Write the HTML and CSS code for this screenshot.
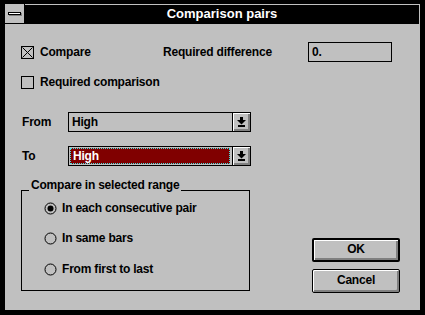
FILE: index.html
```html
<!DOCTYPE html>
<html lang="en">
<head>
    <meta charset="UTF-8">
    <title>Comparison pairs</title>
    <link rel="stylesheet" href="styles.css">
</head>
<body>
    <div class="window">
        <!-- Title bar -->
        <div class="titlebar">
            <div class="sysmenu"><span class="sysmenu-bar"></span></div>
            <div class="caption">Comparison pairs</div>
        </div>

        <div class="client">
            <!-- Compare / required difference -->
            <div class="row row-top">
                <div class="check cell-compare">
                    <svg class="box" width="13" height="13" viewBox="0 0 13 13">
                        <rect x="0.5" y="0.5" width="12" height="12" fill="none" stroke="#000"/>
                        <path d="M1.5 1.5 L11.5 11.5 M11.5 1.5 L1.5 11.5" stroke="#000" stroke-width="1"/>
                    </svg>
                    <span>Compare</span>
                </div>
                <span class="label-diff">Required difference</span>
                <div class="edit">0.</div>
            </div>

            <div class="row row-second">
                <div class="check">
                    <svg class="box" width="13" height="13" viewBox="0 0 13 13">
                        <rect x="0.5" y="0.5" width="12" height="12" fill="none" stroke="#000"/>
                    </svg>
                    <span>Required comparison</span>
                </div>
            </div>

            <!-- Combos -->
            <div class="row row-from">
                <span class="combo-label">From</span>
                <div class="combo">
                    <div class="combo-field">High</div>
                    <div class="combo-btn">
                        <svg width="9" height="10" viewBox="0 0 9 10">
                            <rect x="3" y="0" width="3" height="3" fill="#000"/>
                            <polygon points="0,3 9,3 4.5,7.5" fill="#000"/>
                            <rect x="1" y="8" width="7" height="2" fill="#000"/>
                        </svg>
                    </div>
                </div>
            </div>

            <div class="row row-to">
                <span class="combo-label">To</span>
                <div class="combo">
                    <div class="combo-field focused"><span class="selected">High</span></div>
                    <div class="combo-btn">
                        <svg width="9" height="10" viewBox="0 0 9 10">
                            <rect x="3" y="0" width="3" height="3" fill="#000"/>
                            <polygon points="0,3 9,3 4.5,7.5" fill="#000"/>
                            <rect x="1" y="8" width="7" height="2" fill="#000"/>
                        </svg>
                    </div>
                </div>
            </div>

            <!-- Range group and buttons -->
            <div class="bottom">
                <div class="group">
                    <span class="group-title">Compare in selected range</span>
                    <div class="radio">
                        <svg width="13" height="13" viewBox="0 0 13 13">
                            <circle cx="6.5" cy="6.5" r="5.5" fill="none" stroke="#000"/>
                            <circle cx="6.5" cy="6.5" r="3" fill="#000"/>
                        </svg>
                        <span>In each consecutive pair</span>
                    </div>
                    <div class="radio">
                        <svg width="13" height="13" viewBox="0 0 13 13">
                            <circle cx="6.5" cy="6.5" r="5.5" fill="none" stroke="#000"/>
                        </svg>
                        <span>In same bars</span>
                    </div>
                    <div class="radio">
                        <svg width="13" height="13" viewBox="0 0 13 13">
                            <circle cx="6.5" cy="6.5" r="5.5" fill="none" stroke="#000"/>
                        </svg>
                        <span>From first to last</span>
                    </div>
                </div>

                <div class="buttons">
                    <div class="button default">OK</div>
                    <div class="button">Cancel</div>
                </div>
            </div>
        </div>
    </div>
</body>
</html>
```

FILE: styles.css
```css
/* General */
body {
    margin: 0;
    background: #000;
    font-family: 'Liberation Sans', Arial, sans-serif;
    font-weight: bold;
    font-size: 12px;
    letter-spacing: -0.2px;
    color: #000;
}

.window {
    width: 415px;
    margin: 4px 0 0 5px;
}

/* Title bar */
.titlebar {
    display: flex;
    height: 20px;
}

.sysmenu {
    width: 19px;
    height: 19px;
    background: #c0c0c0;
    padding: 8px 0 0 3px;
    box-sizing: border-box;
}

.sysmenu-bar {
    display: block;
    width: 11px;
    height: 1px;
    background: #fff;
    border: 1px solid #000;
    box-shadow: 1px 1px 0 #808080;
}

.caption {
    flex: 1;
    margin-left: 1px;
    border-top: 1px solid #c0c0c0;
    border-right: 1px solid #c0c0c0;
    color: #fff;
    text-align: center;
    font-size: 13px;
    letter-spacing: 0;
    line-height: 18px;
}

/* Client area */
.client {
    height: 286px;
    background: #c0c0c0;
    padding: 18px 0 0 16px;
    box-sizing: border-box;
}

.row {
    display: flex;
    align-items: center;
    height: 20px;
}

.row-second {
    margin-top: 10px;
}

.row-from {
    margin-top: 20px;
}

.row-to {
    margin-top: 14px;
}

.check {
    display: flex;
    align-items: center;
    gap: 6px;
}

.cell-compare {
    width: 142px;
}

.label-diff {
    width: 145px;
}

.edit {
    width: 84px;
    height: 20px;
    border: 1px solid #000;
    box-sizing: border-box;
    padding-left: 3px;
    line-height: 18px;
}

/* Combo boxes */
.combo-label {
    width: 47px;
    padding-left: 1px;
    box-sizing: border-box;
}

.combo {
    display: flex;
    width: 183px;
    height: 20px;
    border: 1px solid #000;
    box-sizing: border-box;
}

.combo-field {
    flex: 1;
    padding-left: 3px;
    line-height: 18px;
}

.combo-field.focused {
    padding: 1px 2px 1px 1px;
}

.combo-field .selected {
    display: block;
    height: 16px;
    line-height: 14px;
    padding-left: 2px;
    background: #800000;
    color: #fff;
    border: 1px dotted #40e0e0;
    box-sizing: border-box;
}

.combo-btn {
    width: 18px;
    border-left: 1px solid #000;
    box-shadow: inset 1px 1px 0 #fff, inset -2px -2px 0 #808080;
    display: flex;
    justify-content: center;
    align-items: center;
    padding-bottom: 1px;
    box-sizing: border-box;
}

/* Group box and buttons */
.bottom {
    display: flex;
    margin-top: 24px;
}

.group {
    position: relative;
    width: 229px;
    height: 101px;
    border: 1px solid #000;
    box-sizing: border-box;
    padding: 2px 0 0 22px;
}

.group-title {
    position: absolute;
    left: 7px;
    top: -13px;
    padding: 0 2px;
    background: #c0c0c0;
    line-height: 14px;
}

.radio {
    display: flex;
    align-items: center;
    gap: 5px;
    height: 30px;
}

.radio:last-child {
    height: 31px;
    padding-top: 1px;
    box-sizing: border-box;
}

.buttons {
    margin: 48px 0 0 62px;
    display: flex;
    flex-direction: column;
    gap: 7px;
}

.button {
    width: 88px;
    height: 24px;
    border: 1px solid #000;
    border-radius: 2px;
    box-sizing: border-box;
    box-shadow: inset 1px 1px 0 #fff, inset -2px -2px 0 #808080;
    text-align: center;
    line-height: 21px;
}

.button.default {
    border-width: 2px;
    line-height: 19px;
}
```
